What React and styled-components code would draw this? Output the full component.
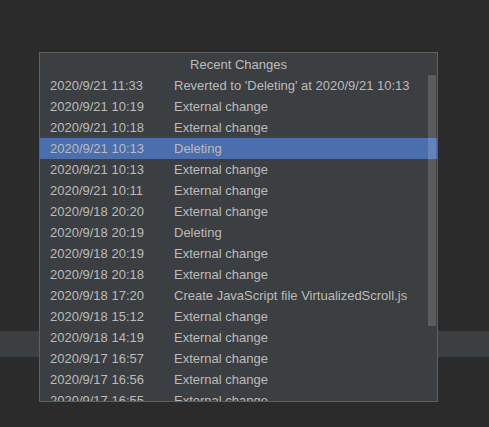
import React from "react";
import styled, { createGlobalStyle } from "styled-components";

const Global = createGlobalStyle`
  html, body { margin: 0; padding: 0; background: #2b2b2b; }
  body { font-family: "Liberation Sans", Arial, sans-serif; }
  #root { width: 489px; height: 427px; overflow: hidden; }
`;

const Page = styled.div`
  position: relative;
  width: 489px;
  height: 427px;
  display: flex;
  flex-direction: column;
  background: #2b2b2b;
`;

const Editor = styled.div`
  height: 331px;
  background: #2b2b2b;
`;

const Band = styled.div`
  height: 26px;
  background: #3c3f41;
`;

const Rest = styled.div`
  flex: 1;
  background: #2b2b2b;
`;

const Popup = styled.div`
  position: absolute;
  left: 39px;
  top: 52px;
  width: 397px;
  height: 348px;
  border: 1px solid #5e6060;
  background: #3c3f41;
  display: flex;
  flex-direction: column;
  overflow: hidden;
`;

const Title = styled.div`
  height: 22px;
  flex: none;
  display: flex;
  align-items: center;
  justify-content: center;
  font-size: 13px;
  color: #bbbbbb;
`;

const List = styled.div`
  position: relative;
  flex: 1;
  overflow: hidden;
`;

const Row = styled.div`
  height: 21px;
  display: grid;
  grid-template-columns: 124px 1fr;
  align-items: center;
  padding-left: 10px;
  font-size: 13px;
  color: #bbbbbb;
  white-space: nowrap;
  background: ${(p) => (p.$selected ? "#4b6eaf" : "transparent")};
`;

const Cell = styled.span`
  line-height: 21px;
`;

const Thumb = styled.div`
  position: absolute;
  right: 1px;
  top: 0;
  width: 8px;
  height: 251px;
  background: rgba(255, 255, 255, 0.15);
`;

const rows = [
  ["2020/9/21 11:33", "Reverted to 'Deleting' at 2020/9/21 10:13"],
  ["2020/9/21 10:19", "External change"],
  ["2020/9/21 10:18", "External change"],
  ["2020/9/21 10:13", "Deleting", true],
  ["2020/9/21 10:13", "External change"],
  ["2020/9/21 10:11", "External change"],
  ["2020/9/18 20:20", "External change"],
  ["2020/9/18 20:19", "Deleting"],
  ["2020/9/18 20:19", "External change"],
  ["2020/9/18 20:18", "External change"],
  ["2020/9/18 17:20", "Create JavaScript file VirtualizedScroll.js"],
  ["2020/9/18 15:12", "External change"],
  ["2020/9/18 14:19", "External change"],
  ["2020/9/17 16:57", "External change"],
  ["2020/9/17 16:56", "External change"],
  ["2020/9/17 16:55", "External change"],
];

export default function App() {
  return (
    <>
      <Global />
      <Page>
        <Editor />
        <Band />
        <Rest />
        <Popup>
          <Title>Recent Changes</Title>
          <List>
            {rows.map(([d, t, sel], i) => (
              <Row key={i} $selected={!!sel}>
                <Cell>{d}</Cell>
                <Cell>{t}</Cell>
              </Row>
            ))}
            <Thumb />
          </List>
        </Popup>
      </Page>
    </>
  );
}
